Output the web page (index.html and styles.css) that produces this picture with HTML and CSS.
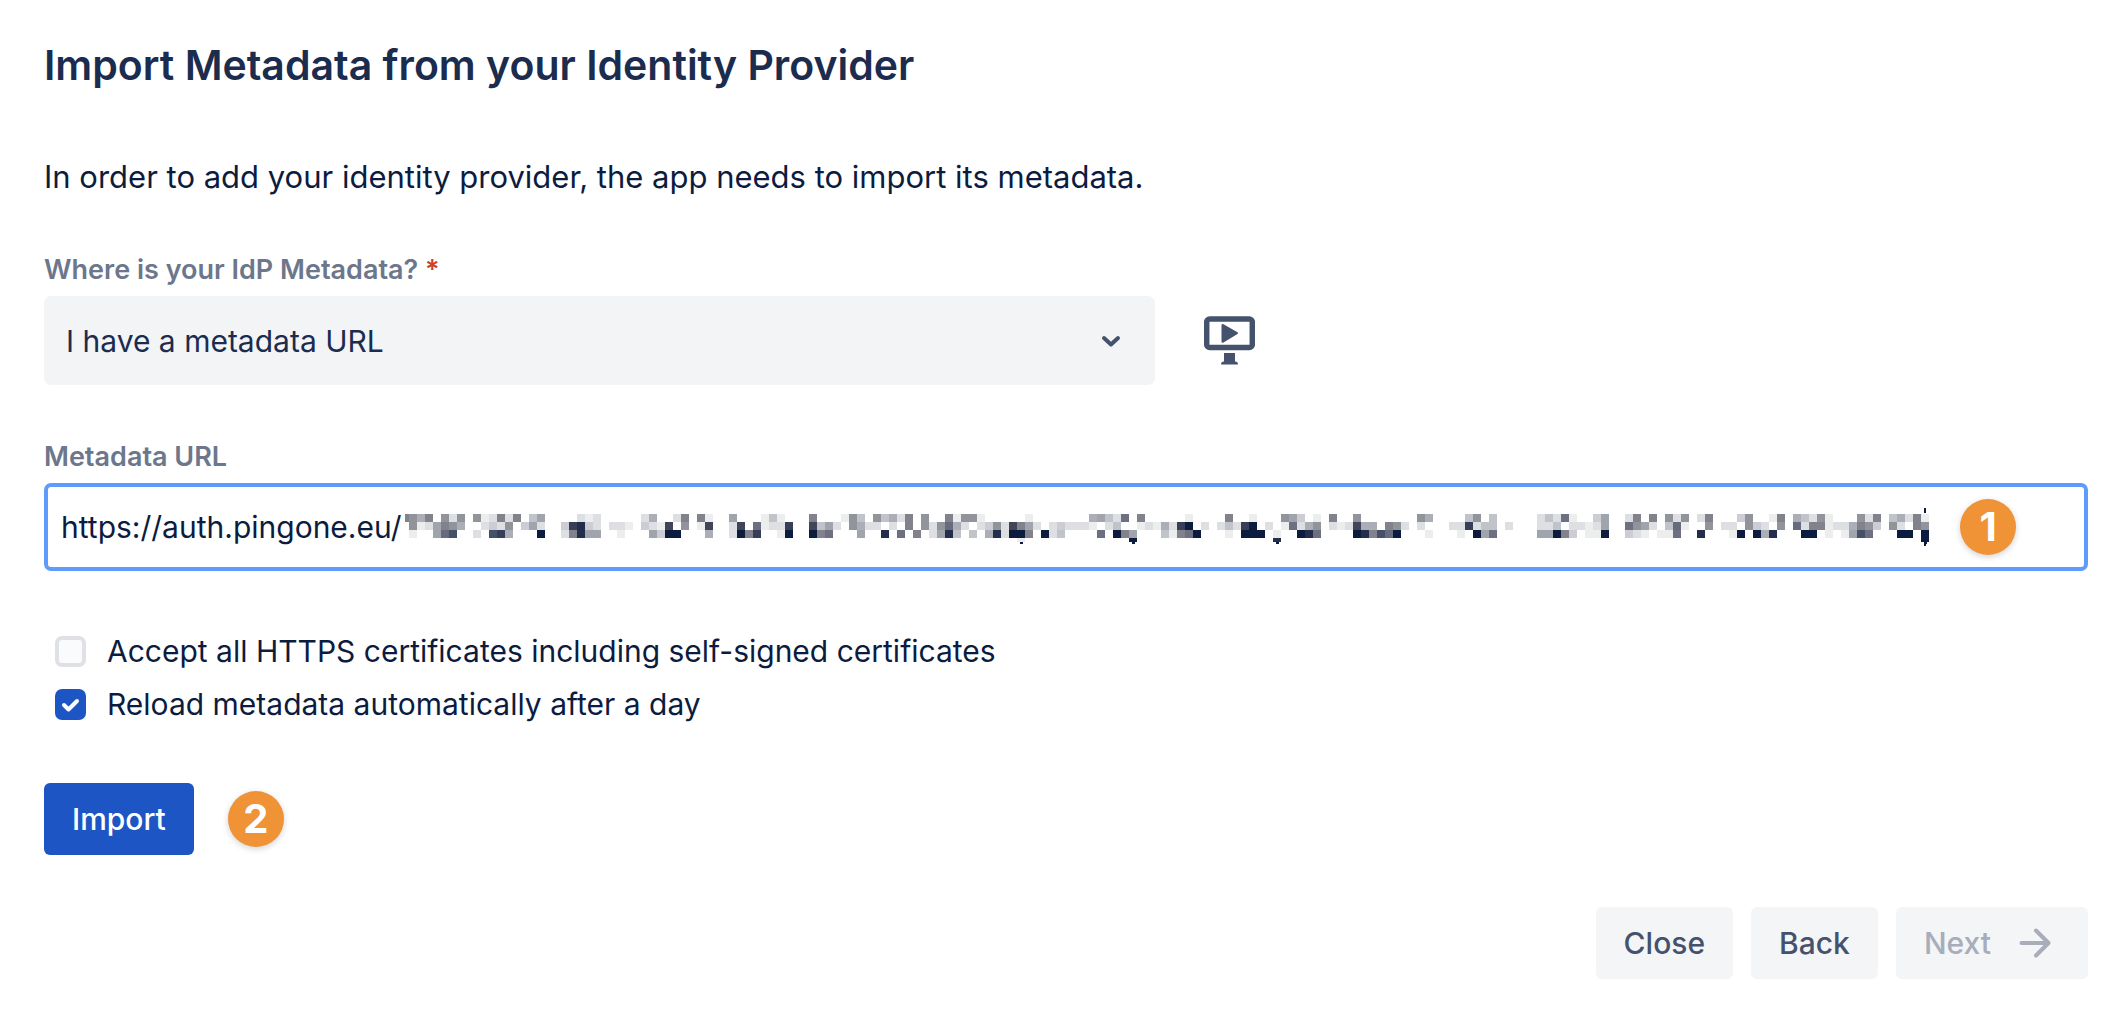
FILE: index.html
```html
<!DOCTYPE html>
<html lang="en">
<head>
<meta charset="utf-8">
<title>Import Metadata from your Identity Provider</title>
<link rel="stylesheet" href="styles.css">
</head>
<body>
<main class="wizard">
  <h1 class="title">Import Metadata from your Identity Provider</h1>
  <p class="intro">In order to add your identity provider, the app needs to import its metadata.</p>

  <form>
    <label class="label" for="source">Where is your IdP Metadata? <span class="required">*</span></label>
    <div class="source-row">
      <div class="select-box">
        <select class="select" id="source"><option>I have a metadata URL</option></select>
        <svg class="chevron" viewBox="0 0 20 14" aria-hidden="true"><path d="M3 4l7 6.500L17 4"/></svg>
      </div>
      <svg class="monitor" viewBox="0 0 51 49" aria-hidden="true">
        <rect x="2.700" y="3" width="45.600" height="28.500" rx="3" fill="none" stroke="currentColor" stroke-width="5.500"/>
        <path d="M17.500 9.500q.2-2 2-1.200l14 8q1.200.9 0 1.800l-14 8.500q-1.800.8-2-1.200zM20 37h11v8.500q3 0 3 3H17q0-3 3-3z" fill="currentColor"/>
      </svg>
    </div>

    <label class="label" for="url">Metadata URL</label>
    <div class="url-field">
      <input class="url-input" id="url" type="text" value="https://auth.pingone.eu/">
      <svg class="mask" id="mask" viewBox="0 0 1524 40" shape-rendering="crispEdges" aria-hidden="true"></svg>
      <span class="step">1</span>
    </div>

    <div class="options">
      <label class="option"><input class="check" type="checkbox">Accept all HTTPS certificates including self-signed certificates</label>
      <label class="option"><input class="check" type="checkbox" checked>Reload metadata automatically after a day</label>
    </div>

    <div class="import-row">
      <button class="button primary" type="button">Import</button>
      <span class="step">2</span>
    </div>

    <div class="actions">
      <button class="button" type="button">Close</button>
      <button class="button" type="button">Back</button>
      <button class="button next" type="button" disabled>Next
        <svg class="arrow" viewBox="0 0 32 30" aria-hidden="true"><path d="M2.500 15H29M17 2.500L29.500 15 17 27.500"/></svg>
      </button>
    </div>
  </form>
</main>
<script src="mask.js"></script>
</body>
</html>
```
FILE: mask.js
```js
// Mosaic that hides the private part of the URL.
// One hex digit per 8px cell: 0 is clear, f is darkest. Groups of ten keep the rows readable.
const rows = [
  "7580727071 2828046000 0212000002 5002808100 6000141000 8000174074 5280700817 7100000100 0000056429 0800000100 " +
  "0080010007 6301080070 0000007500 0047040000 0242910036 0028080727 0280003700 1805427100 0728045281",
  "7126875002 3270362003 de32022103 21c0701c00 2c09122d00 c462075220 2080727a52 02372c8620 2322210240 012152df02 " +
  "0242df0201 92570212c5 5087202000 22d2440200 0224022126 00976204a1 0070220732 070a288122 5873072087",
  "1006ab0020 bd5000f002 8e66001000 63ff000500 2f8d001f00 f89000600e 0908026e40 405e2ff80f 24000090f8 60004189f0 " +
  "0010fff010 0fe90000fe 8baf000100 010f690000 066f83011f 0032101190 0e0001f0f5 e000ff0101 6b9000ff0f"
];
const shades = ["#ffffff", "#eceded", "#dedfe2", "#cccdd4", "#c0c3c9", "#acaeb7", "#a0a4ad", "#92949b",
  "#81828c", "#6c7080", "#666c7d", "#475069", "#404558", "#363e58", "#232d4c", "#0c1c3f"];
const mask = document.getElementById("mask");

function block(x, y, width, height, level) {
  const rect = document.createElementNS("http://www.w3.org/2000/svg", "rect");
  const box = { x, y, width, height, fill: shades[level] };
  for (const name in box) rect.setAttribute(name, box[name]);
  mask.append(rect);
}

block(0, 7, 4, 8, 8);
rows.forEach((row, r) => {
  [...row.replaceAll(" ", "")].forEach((digit, column) => {
    if (digit !== "0") block(4 + column * 8, 7 + r * 8, 8, 8, parseInt(digit, 16));
  });
});

// Letter tails below the mosaic
[[76, 1], [90, 15], [108, 14], [189, 15]].forEach(([column, level]) => {
  block(4 + column * 8, 31, 8, 4, level);
  block(7 + column * 8, 35, 3, 2, 15);
});
// Text caret
block(1519, 1, 2, 5, 15);
block(1519, 35, 2, 4, 15);
```
FILE: styles.css
```css
* { box-sizing: border-box; }

body {
  margin: 0;
  background: #fff;
  color: #0c1c3f;
  font: 30px/40px Inter, "Liberation Sans", sans-serif;
}

.wizard { padding: 39px 38px 35px 44px; }

.title {
  margin: 0 0 66px;
  color: #1b2c4e;
  font-size: 41px;
  font-weight: 600;
  line-height: 52px;
}

.intro {
  margin: 0 0 57px;
  font-size: 31px;
}

.label {
  display: block;
  margin-bottom: 10px;
  color: #6c778c;
  font-size: 27px;
  font-weight: 600;
  line-height: 32px;
}

.required { color: #cf411f; }

.source-row {
  display: grid;
  grid-template-columns: 1111fr 933fr;
  align-items: center;
  margin-bottom: 56px;
}

.select-box {
  display: grid;
  align-items: center;
}

.select {
  grid-area: 1 / 1;
  width: 100%;
  height: 89px;
  padding: 0 22px;
  border: 0;
  border-radius: 7px;
  appearance: none;
  background: #f3f4f6;
  color: #1b2c4e;
  font: inherit;
}

.chevron {
  grid-area: 1 / 1;
  justify-self: end;
  width: 20px;
  margin-right: 34px;
  pointer-events: none;
}

.chevron path,
.arrow path {
  fill: none;
  stroke: currentColor;
  stroke-width: 4;
  stroke-linecap: round;
  stroke-linejoin: round;
}

.chevron,
.monitor { color: #44526d; }

.monitor {
  width: 51px;
  margin-left: 49px;
}

.url-field {
  display: flex;
  align-items: center;
  height: 88px;
  padding-left: 13px;
  border: 4px solid #5e9bfa;
  border-radius: 7px;
  overflow: hidden;
}

.url-input {
  flex: none;
  width: 344px;
  padding: 0;
  border: 0;
  outline: 0;
  background: none;
  color: inherit;
  font: inherit;
}

.mask {
  flex: none;
  width: 1524px;
  height: 40px;
}

.step {
  flex: none;
  width: 56px;
  height: 56px;
  border-radius: 50%;
  background: #f09236;
  box-shadow: 0 2px 6px #0000002e;
  color: #fff;
  font-size: 40px;
  font-weight: 700;
  line-height: 56px;
  text-align: center;
}

.url-field .step { margin-left: 31px; }

.options {
  display: grid;
  gap: 13px;
  margin: 60px 0 59px 11px;
}

.option {
  display: flex;
  align-items: center;
  gap: 21px;
}

.check {
  width: 31px;
  height: 31px;
  margin: 0;
  border: 4px solid #dfe1e5;
  border-radius: 7px;
  appearance: none;
  background: #fafbfc;
}

.check:checked {
  border-color: #1d55c4;
  background: #1d55c4 url("data:image/svg+xml,%3Csvg xmlns='http://www.w3.org/2000/svg' viewBox='0 0 23 23'%3E%3Cpath d='M5 12l4.500 4.500L18 8' fill='none' stroke='white' stroke-width='4' stroke-linecap='round' stroke-linejoin='round'/%3E%3C/svg%3E") center / 23px no-repeat;
}

.import-row {
  display: flex;
  align-items: center;
  gap: 34px;
  margin-bottom: 52px;
}

.button {
  display: flex;
  align-items: center;
  height: 72px;
  padding: 0 28px;
  border: 0;
  border-radius: 6px;
  background: #f4f5f7;
  color: #44526d;
  font: inherit;
  font-weight: 500;
}

.primary {
  background: #1d55c4;
  color: #fff;
}

.actions {
  display: flex;
  justify-content: flex-end;
  gap: 18px;
}

.next {
  gap: 28px;
  padding-right: 37px;
  color: #a7adba;
}

.arrow { width: 32px; }
```
